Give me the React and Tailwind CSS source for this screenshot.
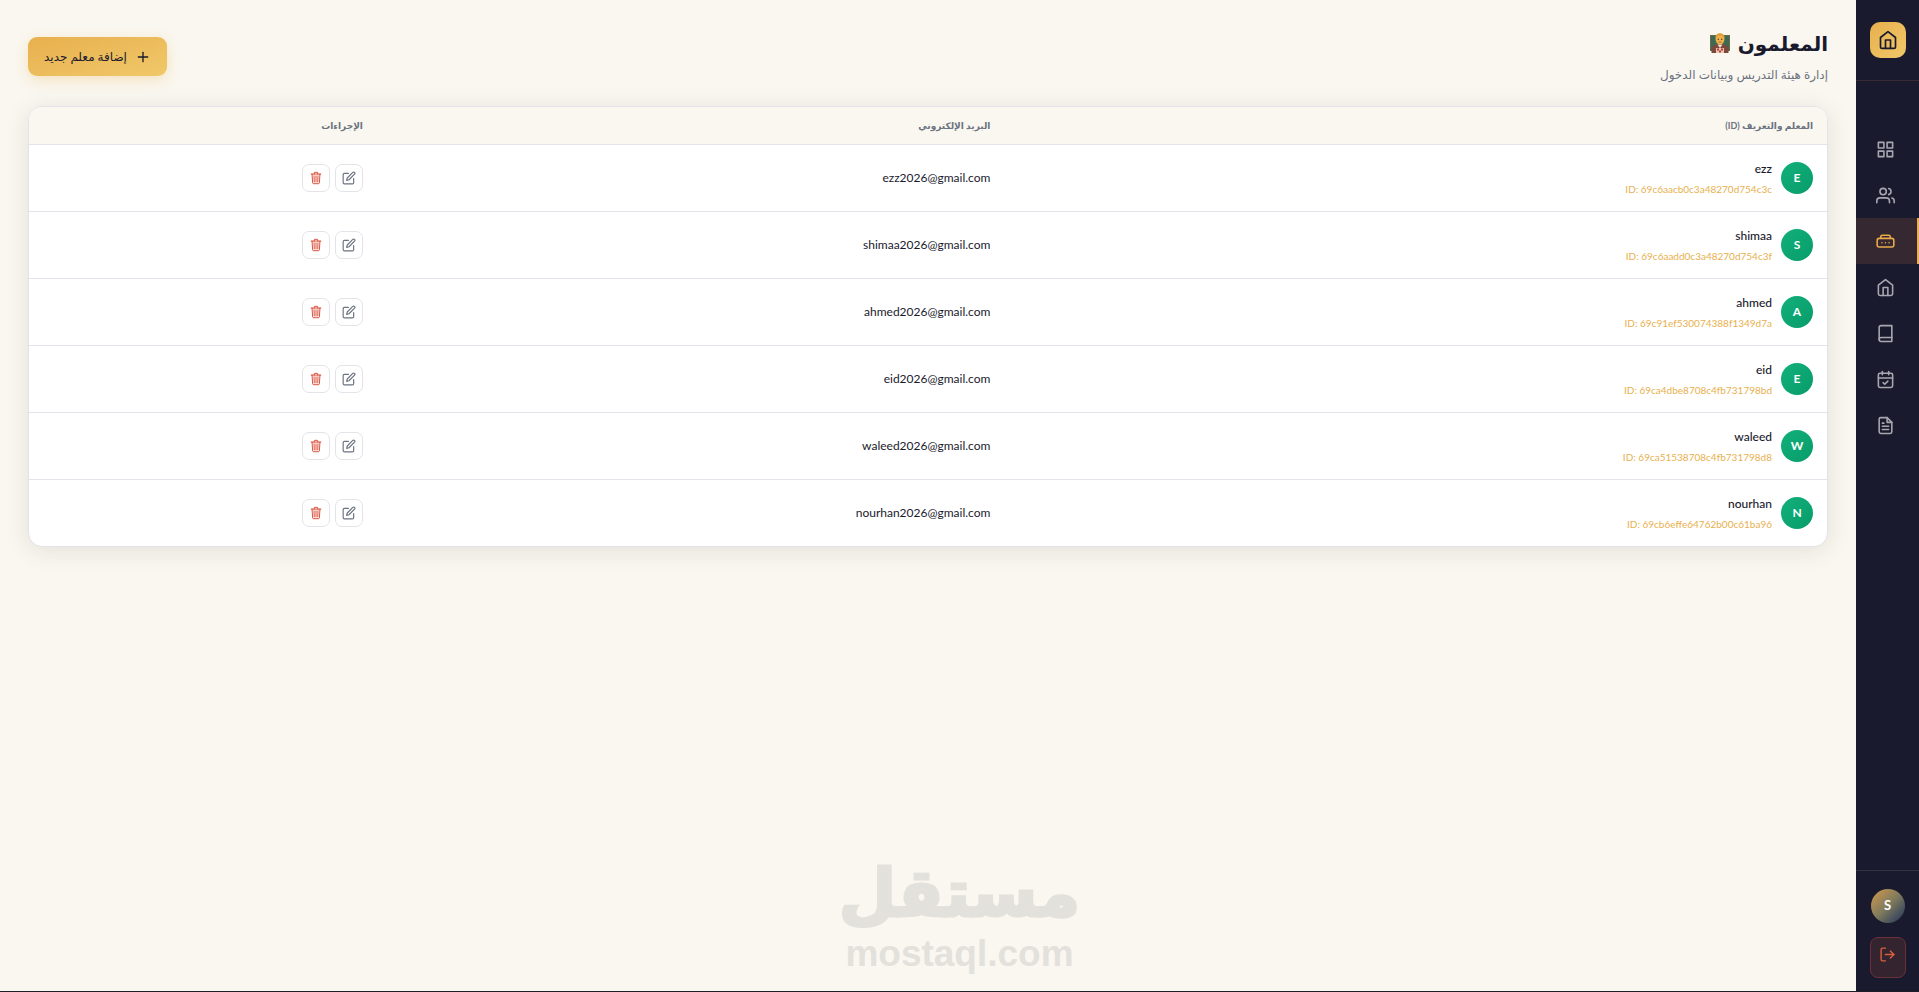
import React from "react";
import { FiBook, FiEdit, FiFileText, FiGrid, FiHome, FiLogOut, FiPlus, FiUsers } from "react-icons/fi";
import { IoTrashOutline } from "react-icons/io5";
import { CalendarCheck } from "lucide-react";

const teachers = [
  { id: "69c6aacb0c3a48270d754c3c", name: "ezz", email: "ezz2026@gmail.com" },
  { id: "69c6aadd0c3a48270d754c3f", name: "shimaa", email: "shimaa2026@gmail.com" },
  { id: "69c91ef530074388f1349d7a", name: "ahmed", email: "ahmed2026@gmail.com" },
  { id: "69ca4dbe8708c4fb731798bd", name: "eid", email: "eid2026@gmail.com" },
  { id: "69ca51538708c4fb731798d8", name: "waleed", email: "waleed2026@gmail.com" },
  { id: "69cb6effe64762b00c61ba96", name: "nourhan", email: "nourhan2026@gmail.com" },
];

const TeacherIcon = ({ size }) => (
  <svg width={size} height={size} viewBox="0 0 24 24" fill="none" stroke="currentColor" strokeWidth="2" strokeLinecap="round" strokeLinejoin="round">
    <path d="M6 8V6a2 2 0 0 1 2-2h8a2 2 0 0 1 2 2v2" />
    <rect x="1.500" y="8" width="21" height="11" rx="2.5" />
    <path d="M7.5 13.5h.01M12 13.5h.01M16.5 13.5h.01" />
  </svg>
);

const TeacherEmoji = () => (
  <svg className="h-5 w-5" viewBox="0 0 20 20" aria-hidden="true">
    <rect x="0" y="2" width="20" height="16" fill="#6b6a4c" />
    <rect x="1" y="3" width="18" height="14" fill="#3d6b52" />
    <path d="M1.500 20v-4c0-3 3-5 8.500-5s8.500 2 8.500 5v4z" fill="#7b4a3c" />
    <path d="M7.500 11.500h5L10 15z" fill="#f3e6d8" />
    <path d="M6 15h8v5H6z" fill="#e3c9a8" />
    <path d="M7 15.500h2v2H7zM11 15.500h2v2h-2zM9 17.500h2v2H9z" fill="#c8364a" />
    <ellipse cx="10" cy="6" rx="4.500" ry="5.500" fill="#edb04c" />
    <path d="M5.500 5C5.300 2 7 .3 10 .3S14.700 2 14.500 5C13.500 3 12 2.700 10 2.700S6.500 3 5.500 5z" fill="#dfa03a" />
    <circle cx="8.300" cy="6.300" r=".7" fill="#5a3a20" />
    <circle cx="11.700" cy="6.300" r=".7" fill="#5a3a20" />
    <path d="M8.500 8.800q1.500 1 3 0" stroke="#9a5a2a" strokeWidth=".7" fill="none" />
  </svg>
);

const links = [
  { label: "لوحة التحكم", Icon: FiGrid },
  { label: "الطلاب", Icon: FiUsers },
  { label: "المعلمون", Icon: TeacherIcon, active: true },
  { label: "الفصول", Icon: FiHome },
  { label: "المواد", Icon: FiBook },
  { label: "الحضور", Icon: CalendarCheck },
  { label: "التقارير", Icon: FiFileText },
];

const Sidebar = () => {
  return (
    <aside className="flex w-[63px] shrink-0 flex-col bg-[#1a1a2e]">
      <div className="flex h-[81px] items-center justify-center border-b border-[#3a2a36]">
        <a
          href="#home"
          aria-label="الرئيسية"
          className="flex h-9 w-9 items-center justify-center rounded-[10px] bg-linear-to-br from-[#e8b04e] to-[#f0c869] text-[#1a1a2e]"
        >
          <FiHome size={20} />
        </a>
      </div>
      <nav className="flex flex-1 flex-col pt-[45px]">
        {links.map(({ label, Icon, active }) => (
          <a
            key={label}
            href="#section"
            aria-label={label}
            className={`flex h-[46px] items-center justify-center border-r-2 pr-[3px] ${
              active
                ? "border-[#e8b04e] bg-[#352831] text-[#eba94b]"
                : "border-transparent text-[#a7a7b0]"
            }`}
          >
            <Icon size={19} strokeWidth={2} />
          </a>
        ))}
      </nav>
      <div className="flex flex-col items-center gap-[14px] border-t border-[#33323f] pt-[18px] pb-[13px]">
        <div className="flex h-[34px] w-[34px] items-center justify-center rounded-full bg-linear-to-br from-[#d69a48] via-[#7f7a5c] to-[#1f2f58] text-[13px] font-bold text-white">
          S
        </div>
        <button
          aria-label="تسجيل الخروج"
          className="flex h-[41px] w-9 items-start justify-center rounded-lg border border-[#6c2f3b] bg-[#33242f] pt-2 text-[#d9613f]"
        >
          <FiLogOut size={17} />
        </button>
      </div>
    </aside>
  );
};

const Watermark = () => (
  <div
    dir="ltr"
    className="pointer-events-none absolute inset-x-0 bottom-4 flex flex-col items-center font-bold text-[#e3e1dc]"
  >
    <span lang="ar" className="font-['DejaVu_Sans'] text-[66px] leading-[78px] [-webkit-text-stroke:3px_#e3e1dc]">
      مستقل
    </span>
    <span className="font-['Liberation_Sans'] text-[37px] leading-[42px]">mostaql.com</span>
  </div>
);

const App = () => {
  return (
    <div
      dir="rtl"
      className="relative flex min-h-screen border-b border-[#1e1e26] bg-[#faf7f0] font-['Lato','DejaVu_Sans',sans-serif] text-[#1a1a2e]"
    >
      <Sidebar />
      <main className="min-w-0 flex-1 px-7 pt-7">
        <header className="mb-[21px] flex items-center justify-between">
          <div>
            <h1 className="flex items-center gap-2 text-xl leading-[30px] font-bold">
              المعلمون
              <TeacherEmoji />
            </h1>
            <p className="mt-[7px] text-xs leading-5 text-[#6b7280]">إدارة هيئة التدريس وبيانات الدخول</p>
          </div>
          <button className="flex h-[39px] items-center gap-2 rounded-[9px] bg-linear-to-br from-[#e8b04e] to-[#f0c869] px-4 text-xs font-medium shadow-[0_4px_14px_rgba(232,176,78,0.3)]">
            <FiPlus size={16} />
            إضافة معلم جديد
          </button>
        </header>

        <div className="overflow-hidden rounded-[14px] border border-[#e2e4e9] bg-white shadow-[0_4px_24px_rgba(26,26,46,0.1)]">
          <table className="w-full table-fixed text-right">
            <thead>
              <tr className="h-[37px] border-b border-[#e2e4e9] bg-[#faf7f0] text-[9px] text-[#6b7280]">
                <th className="w-[45.75%] px-[14px] font-bold">المعلم والتعريف (ID)</th>
                <th className="w-[34.9%] px-[14px] font-bold">البريد الإلكتروني</th>
                <th className="px-[14px] font-bold">الإجراءات</th>
              </tr>
            </thead>
            <tbody>
              {teachers.map((item) => (
                <tr key={item.id} className="h-[67px] border-b border-[#e2e4e9] last:border-b-0">
                  <td className="px-[14px]">
                    <div className="flex items-center gap-[9px]">
                      <div className="flex h-8 w-8 items-center justify-center rounded-full bg-linear-to-br from-[#12b07b] to-[#079c69] text-xs font-bold text-white">
                        {item.name[0].toUpperCase()}
                      </div>
                      <div>
                        <p className="text-xs leading-[22px] font-medium">{item.name}</p>
                        <p dir="ltr" className="text-[10px] leading-[18px] text-[#e8b04e]">
                          ID: {item.id}
                        </p>
                      </div>
                    </div>
                  </td>
                  <td className="px-[14px] text-xs">{item.email}</td>
                  <td className="px-[14px]">
                    <div className="flex gap-[5px]">
                      <button
                        aria-label="تعديل"
                        className="flex h-7 w-7 items-center justify-center rounded-[7px] border border-[#e2e4e9] text-[#6b7280]"
                      >
                        <FiEdit size={14} />
                      </button>
                      <button
                        aria-label="حذف"
                        className="flex h-7 w-7 items-center justify-center rounded-[7px] border border-[#e2e4e9] text-[#d63a22]"
                      >
                        <IoTrashOutline size={14} />
                      </button>
                    </div>
                  </td>
                </tr>
              ))}
            </tbody>
          </table>
        </div>
      </main>
      <Watermark />
    </div>
  );
};

export default App;
